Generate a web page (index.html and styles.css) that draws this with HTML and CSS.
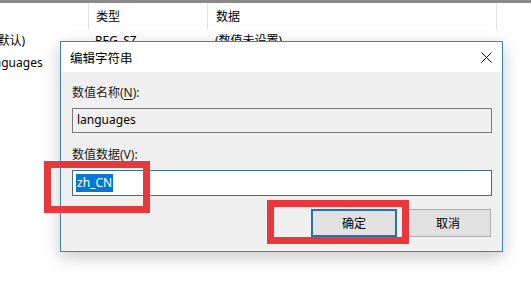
FILE: index.html
```html
<!DOCTYPE html>
<html lang="zh-CN">
<head>
  <meta charset="UTF-8">
  <title>编辑字符串</title>
  <link rel="stylesheet" href="styles.css">
</head>
<body>
  <main class="regedit">
    <div class="list-head">
      <div class="cell cell-name"></div>
      <div class="cell">类型</div>
      <div class="cell">数据</div>
    </div>
    <div class="list-row">
      <div class="cell cell-name">(默认)</div>
      <div class="cell">REG_SZ</div>
      <div class="cell">(数值未设置)</div>
    </div>
    <div class="list-row">
      <div class="cell cell-name cell-long">languages</div>
      <div class="cell"></div>
      <div class="cell"></div>
    </div>
  </main>

  <!-- 对话框窗口 -->
  <section class="dialog">
    <header class="dialog-title">
      <span>编辑字符串</span>
      <svg class="close-icon" width="11" height="11" viewBox="0 0 11 11">
        <path d="M0.5 0.5 L10.5 10.5 M10.5 0.5 L0.5 10.5" stroke="#111" stroke-width="1" fill="none"/>
      </svg>
    </header>
    <div class="dialog-body">
      <label class="field-label">数值名称(<u>N</u>):</label>
      <div class="field field-readonly">languages</div>
      <label class="field-label">数值数据(<u>V</u>):</label>
      <div class="field field-edit"><span class="selected">zh_CN</span></div>
      <div class="button-row">
        <button class="button button-ok">确定</button>
        <button class="button">取消</button>
      </div>
    </div>
  </section>

  <!-- 红色标注框 -->
  <div class="mark mark-input"></div>
  <div class="mark mark-ok"></div>
</body>
</html>
```

FILE: styles.css
```css
:root {
  --color-border: #3f82ba;
  --color-panel: #f0f0f0;
  --color-button: #e1e1e1;
  --color-focus: #2a6fb0;
  --color-mark: #e8383b;
  --color-text: #000000;
}
* {
  margin: 0;
  padding: 0;
  box-sizing: border-box;
}
body {
  width: 531px;
  height: 281px;
  overflow: hidden;
  background-color: #ffffff;
  font-family: "Noto Sans", "Noto Sans CJK SC", sans-serif;
  font-size: 12px;
  color: var(--color-text);
  position: relative;
}
.regedit {
  border-top: 3px solid #8a8a8a;
}
.list-head,
.list-row {
  display: grid;
  grid-template-columns: 88px 119px 290px;
}
.list-head {
  height: 27px;
  align-items: center;
}
.list-head .cell + .cell {
  border-left: 1px solid #e5e5e5;
  height: 27px;
  line-height: 27px;
}
.list-head .cell:last-child {
  border-right: 1px solid #e5e5e5;
}
.list-row {
  height: 22px;
  line-height: 22px;
}
.cell {
  padding-left: 7px;
  white-space: nowrap;
}
.list-head .cell:last-child,
.list-row .cell:last-child {
  padding-left: 8px;
}
.cell-name {
  margin-left: -13px;
}
.cell-long {
  margin-left: -23px;
}
.dialog {
  position: absolute;
  left: 60px;
  top: 41px;
  width: 443px;
  height: 211px;
  border: 1px solid var(--color-border);
  background-color: var(--color-panel);
  box-shadow: 0 5px 16px rgba(0, 0, 0, 0.22);
  display: flex;
  flex-direction: column;
}
.dialog-title {
  height: 30px;
  background-color: #ffffff;
  display: flex;
  align-items: center;
  justify-content: space-between;
  padding: 0 10px 0 9px;
  font-size: 12.5px;
}
.dialog-body {
  flex: 1;
  padding: 13px 10px 0 11px;
  display: flex;
  flex-direction: column;
}
.field-label {
  line-height: 16px;
  color: #1a1a1a;
}
.field-label u {
  text-underline-offset: 2px;
}
.field {
  margin-top: 7px;
  line-height: 22px;
  padding: 0 4px;
  white-space: nowrap;
}
.field-readonly {
  height: 25px;
  border: 1px solid #7a7a7a;
  background-color: var(--color-panel);
  margin-bottom: 14px;
}
.field-edit {
  height: 26px;
  border: 1px solid #3c6f97;
  background-color: #ffffff;
  padding: 2px 3px;
  line-height: 20px;
}
.selected {
  display: inline-block;
  background-color: #0078d7;
  color: #ffffff;
  padding: 0 1px;
  line-height: 18px;
}
.button-row {
  margin-top: 13px;
  display: flex;
  justify-content: flex-end;
  gap: 8px;
  padding-right: 1px;
}
.button {
  width: 86px;
  height: 28px;
  font-family: inherit;
  font-size: 12px;
  background-color: var(--color-button);
  border: 1px solid #adadad;
  color: var(--color-text);
}
.button-ok {
  border: 2px solid var(--color-focus);
}
.mark {
  position: absolute;
  border: 7px solid var(--color-mark);
}
.mark-input {
  left: 44px;
  top: 161px;
  width: 106px;
  height: 52px;
}
.mark-ok {
  left: 267px;
  top: 200px;
  width: 142px;
  height: 44px;
}
```
